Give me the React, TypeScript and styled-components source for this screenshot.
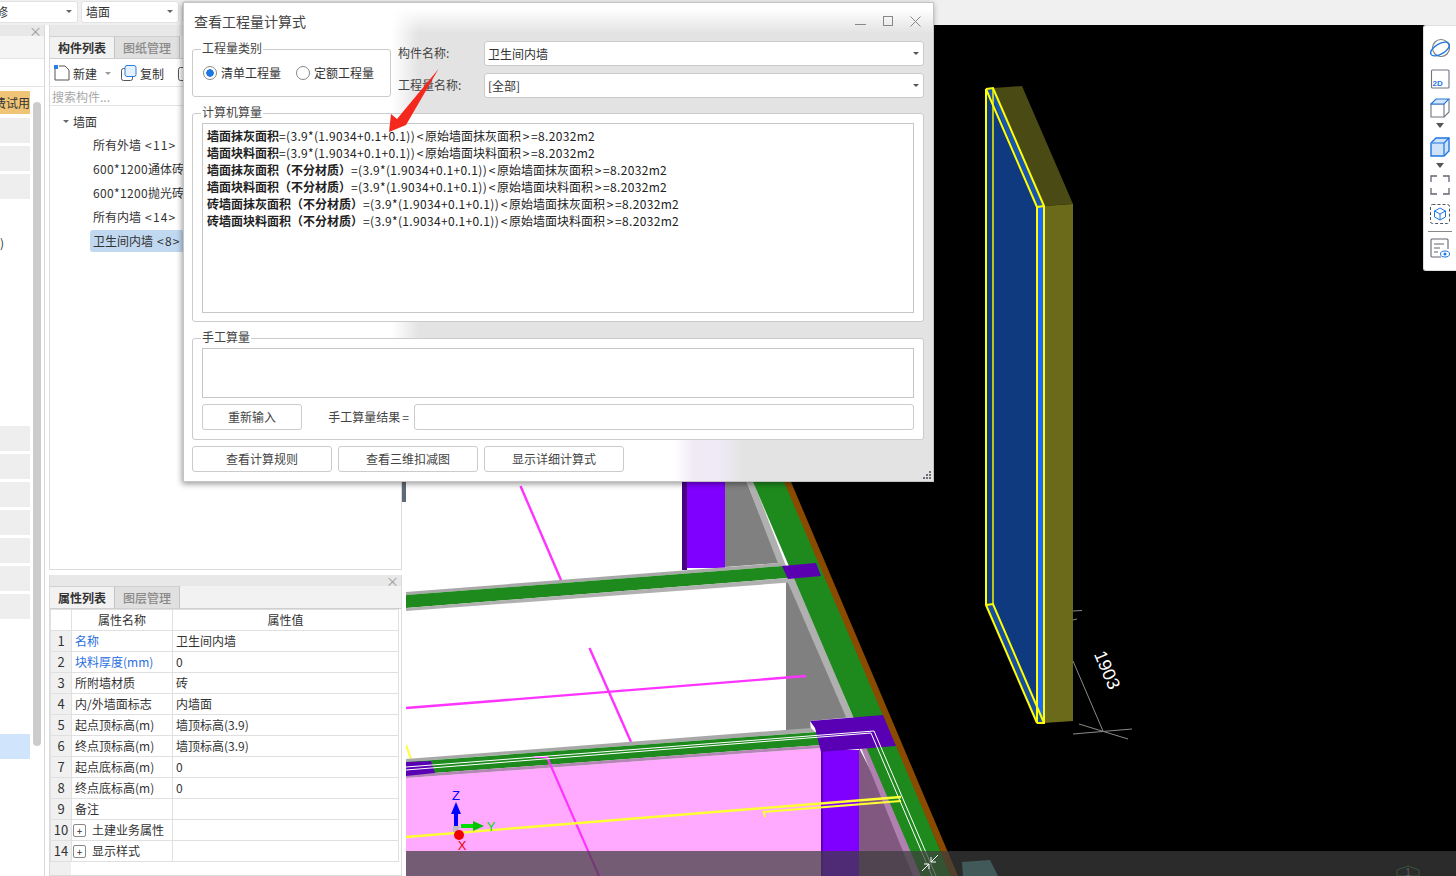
import styled, { createGlobalStyle } from "styled-components"

const GlobalStyle = createGlobalStyle`
  html, body { margin: 0; padding: 0; background: #fff; }
  body { font-family: "Noto Sans CJK SC", "Noto Sans", sans-serif; font-size: 12px; color: #333; }
  * { box-sizing: border-box; }
`

const Page = styled.div`
  position: relative;
  width: 1456px;
  height: 876px;
  overflow: hidden;
  display: flex;
  flex-direction: column;
`

/* top bar */
const TopBar = styled.div`
  height: 25px;
  flex: none;
  display: flex;
  gap: 3px;
  padding-top: 1px;
  background: #f0f0f0;
`
const TopSelect = styled.div<{ $w: number; $shift?: number }>`
  width: ${p => p.$w}px;
  height: 22px;
  margin-left: ${p => p.$shift ?? 0}px;
  padding: 0 0 2px 4px;
  display: flex;
  align-items: center;
  justify-content: space-between;
  background: #fff;
  border: 1px solid #e2e2e2;
  border-radius: 3px;
  font-size: 12px;
`
const Caret = styled.i`
  width: 0;
  height: 0;
  margin-right: 5px;
  border-left: 3px solid transparent;
  border-right: 3px solid transparent;
  border-top: 3px solid #666;
`

const Body = styled.div`
  flex: 1;
  display: flex;
  min-height: 0;
`

/* far left sidebar */
const Sidebar = styled.div`
  width: 45px;
  flex: none;
  border-right: 1px solid #d8d8d8;
  display: flex;
  flex-direction: column;
  overflow: hidden;
`
const CloseStrip = styled.div`
  height: 11px;
  flex: none;
  display: flex;
  align-items: center;
  justify-content: flex-end;
  padding-right: 2px;
  background: #e8e8e8;
  color: #999;
  font-size: 13px;
  line-height: 11px;
`
const SideTabs = styled.div`
  height: 23px;
  flex: none;
  background: #f5f5f5;
  border-bottom: 1px solid #e4e4e4;
`
const SideTools = styled.div`
  height: 28px;
  flex: none;
  border-bottom: 1px solid #e4e4e4;
`
const SideMain = styled.div`
  flex: 1;
  display: flex;
  gap: 3px;
`
const SideList = styled.div`
  width: 30px;
  flex: none;
  padding-top: 4px;
  display: flex;
  flex-direction: column;
`
const SideRow = styled.div<{ $kind: string }>`
  height: ${p => (p.$kind === "orange" ? 23 : 25)}px;
  margin-bottom: ${p => (p.$kind === "orange" ? 4 : 3)}px;
  flex: none;
  display: flex;
  align-items: center;
  justify-content: flex-end;
  overflow: hidden;
  white-space: nowrap;
  font-size: 12px;
  background: ${p =>
    p.$kind === "orange" ? "#efc476" : p.$kind === "gray" ? "#eeeeee" : p.$kind === "blue" ? "#d0e5fb" : "transparent"};
`
const SideParen = styled.span`
  width: 100%;
  text-align: left;
  margin-left: -1px;
`
const SideThumb = styled.div`
  width: 8px;
  height: 644px;
  margin-top: 15px;
  background: #cccccc;
  border-radius: 4px;
`

/* middle panels */
const PanelColumn = styled.div`
  width: 353px;
  margin-left: 4px;
  flex: none;
  display: flex;
  flex-direction: column;
  gap: 5px;
`
const Panel = styled.div<{ $h: number }>`
  height: ${p => p.$h}px;
  flex: none;
  display: flex;
  flex-direction: column;
  background: #fff;
  border: 1px solid #dcdcdc;
  border-top: none;
  overflow: hidden;
`
const TabStrip = styled.div`
  height: 23px;
  flex: none;
  display: flex;
  background: #f2f2f2;
  border-bottom: 1px solid #cfcfcf;
`
const Tab = styled.div<{ $active?: boolean }>`
  width: 65px;
  display: flex;
  align-items: center;
  justify-content: center;
  font-weight: ${p => (p.$active ? 700 : 500)};
  color: ${p => (p.$active ? "#333" : "#8a8a8a")};
  background: ${p => (p.$active ? "#f2f2f2" : "#e0e0e0")};
  border-right: 1px solid #c4c4c4;
  border-top: 1px solid #d0d0d0;
`
const Toolbar = styled.div`
  height: 28px;
  flex: none;
  display: flex;
  align-items: center;
  padding: 1px 0 0 4px;
  border-bottom: 1px solid #e4e4e4;
  white-space: nowrap;
`
const ToolButton = styled.div<{ $w: number }>`
  width: ${p => p.$w}px;
  flex: none;
  display: flex;
  align-items: center;
  gap: 3px;
`
const ToolCaret = styled(Caret)`
  margin: 0 0 0 5px;
  border-top-color: #999;
`
const SearchBox = styled.div`
  height: 19px;
  flex: none;
  padding-left: 2px;
  display: flex;
  align-items: center;
  color: #a8a8a8;
  border-bottom: 1px solid #e4e4e4;
`
const Tree = styled.div`
  padding-top: 3px;
  display: flex;
  flex-direction: column;
  white-space: nowrap;
`
const TreeRoot = styled.div`
  height: 24px;
  display: flex;
  align-items: center;
  padding-left: 13px;
  gap: 4px;
`
const TreeCaret = styled(Caret)`
  margin-right: 0;
`
const TreeItem = styled.div`
  height: 24px;
  display: flex;
  align-items: center;
`
const TreeLabel = styled.span<{ $selected?: boolean }>`
  margin-left: 40px;
  height: 22px;
  line-height: 22px;
  padding: 0 3px;
  border-radius: 3px;
  background: ${p => (p.$selected ? "#c0d8f0" : "transparent")};
`
const TreeCount = styled.span`
  margin-left: 4px;
  letter-spacing: 1.2px;
`
const TreeSize = styled.span`
  letter-spacing: 0.35px;
`

/* property table */
const PropTable = styled.table`
  width: 348px;
  border-collapse: collapse;
  table-layout: fixed;
  flex: none;
  td, th {
    height: 21px;
    padding: 0 0 2px 3px;
    border: 1px solid #e0e0e0;
    font-size: 12px;
    font-weight: 400;
    white-space: nowrap;
    overflow: hidden;
  }
  th { text-align: center; padding: 0 0 2px; }
`
const NumCell = styled.td`
  && { padding: 0 0 1px; text-align: center; background: #f0f0f0; font-size: 13px; }
`
const BlueText = styled.span`
  color: #2a6fe0;
`
const Expander = styled.span`
  display: inline-flex;
  width: 13px;
  height: 13px;
  margin: 0 6px 0 -2px;
  vertical-align: 0;
  align-items: center;
  justify-content: center;
  border: 1px solid #888;
  border-radius: 2px;
  font-size: 10px;
  line-height: 10px;
`
const Gutter = styled.div`
  width: 21px;
  flex: 1;
  background: #f0f0f0;
`

const Splitter = styled.div`
  width: 4px;
  flex: none;
  background: #fff;
`
const SplitHandle = styled.div`
  height: 20px;
  margin-top: 457px;
  background: #5d6b78;
`

/* 3D viewport */
const Viewport = styled.div`
  position: relative;
  flex: 1;
  background: #000;
  overflow: hidden;
`
const Scene = styled.svg`
  display: block;
  width: 1050px;
  height: 851px;
`
const BottomShade = styled.div`
  position: absolute;
  left: 0;
  right: 0;
  bottom: 0;
  height: 25px;
  padding: 2px 0 0 514px;
  background: rgba(60, 60, 60, 0.71);
`
const ViewTools = styled.div`
  position: absolute;
  top: 0;
  right: 0;
  width: 33px;
  height: 246px;
  padding: 12px 1px 0 0;
  display: flex;
  flex-direction: column;
  align-items: center;
  background: #fff;
  border: 1px solid #e0e0e0;
  border-right: none;
  border-radius: 3px 0 0 3px;
`
const ToolIcon = styled.svg<{ $mb?: number }>`
  display: block;
  flex: none;
  margin-bottom: ${p => p.$mb ?? 0}px;
`
const ViewDivider = styled.div`
  width: 24px;
  height: 1px;
  margin: 0 0 6px;
  flex: none;
  background: #888;
`

/* dialog */
const Dialog = styled.div`
  position: absolute;
  left: 183px;
  top: 2px;
  width: 751px;
  height: 480px;
  display: flex;
  flex-direction: column;
  border: 1px solid #c4c4c4;
  box-shadow: -1px 2px 6px rgba(0, 0, 0, 0.4);
  background:
    linear-gradient(to right, #fff 0, #fff 490px, #efeaf6 510px, #efeaf6 535px, #e3e3e3 560px) left bottom / 100% 42px no-repeat,
    linear-gradient(to bottom, #fff 6px, rgba(255, 255, 255, 0) 30px),
    linear-gradient(to right, #fff 208px, rgba(255, 255, 255, 0) 235px),
    #e3e3e3;
`
const TitleBar = styled.div`
  height: 38px;
  flex: none;
  padding: 0 12px 2px 10px;
  display: flex;
  align-items: center;
  justify-content: space-between;
  font-size: 14px;
  color: #444;
`
const WinButtons = styled.div`
  display: flex;
  gap: 17px;
  align-items: center;
`
const DialogBody = styled.div`
  flex: 1;
  display: flex;
  flex-direction: column;
  padding: 0 9px 0 8px;
`
const TopRow = styled.div`
  display: flex;
  flex: none;
  height: 57px;
  gap: 7px;
`
const Group = styled.div<{ $h: number; $mt?: number; $w?: number }>`
  position: relative;
  flex: none;
  width: ${p => (p.$w ? `${p.$w}px` : "auto")};
  height: ${p => p.$h}px;
  margin-top: ${p => p.$mt ?? 0}px;
  padding: 9px;
  display: flex;
  flex-direction: column;
  background: #fff;
  border: 1px solid #cbcbcb;
  border-radius: 3px;
`
const GroupLabel = styled.span`
  position: absolute;
  left: 8px;
  top: -11px;
  line-height: 18px;
  padding: 0 1px;
  background: #fff;
  color: #444;
`
const RadioRow = styled.div`
  display: flex;
  align-items: center;
  height: 100%;
  padding-left: 1px;
  gap: 4px;
`
const Radio = styled.span<{ $on?: boolean; $gap?: number }>`
  width: 14px;
  height: 14px;
  margin-left: ${p => p.$gap ?? 0}px;
  flex: none;
  border: 1px solid #8a8a8a;
  border-radius: 50%;
  background: radial-gradient(circle, ${p => (p.$on ? "#1f77e0 0, #1f77e0 3.5px" : "#fff 0, #fff 3.5px")}, #fff 4px);
`
const RadioText = styled.span`
  margin-top: -1px;
`
const FieldColumn = styled.div`
  flex: 1;
  display: flex;
  flex-direction: column;
  gap: 7px;
`
const FieldRow = styled.div`
  height: 25px;
  display: flex;
  align-items: center;
`
const FieldLabel = styled.span`
  width: 86px;
  flex: none;
  margin-top: -2px;
  color: #444;
`
const FieldSelect = styled.div`
  flex: 1;
  height: 25px;
  padding: 0 0 1px 3px;
  display: flex;
  align-items: center;
  justify-content: space-between;
  background: #fff;
  border: 1px solid #cbcbcb;
  border-radius: 3px;
`
const SmallCaret = styled(Caret)`
  margin-right: 4px;
  border-top-color: #555;
`
const TextBox = styled.div<{ $h: number }>`
  height: ${p => p.$h}px;
  flex: none;
  padding: 3px 4px;
  background: #fff;
  border: 1px solid #c6c6c6;
`
const FormulaLine = styled.div`
  height: 17px;
  line-height: 17px;
  white-space: nowrap;
  color: #222;
`
const FormulaMath = styled.span`
  letter-spacing: 0.33px;
`
const Angle = styled.span`
  display: inline-block;
  width: 10px;
  text-align: center;
`
const ManualRow = styled.div`
  margin-top: 6px;
  height: 26px;
  display: flex;
  align-items: center;
`
const Button = styled.div<{ $w: number }>`
  width: ${p => p.$w}px;
  height: 26px;
  flex: none;
  padding-bottom: 2px;
  display: flex;
  align-items: center;
  justify-content: center;
  background: #fff;
  border: 1px solid #cbcbcb;
  border-radius: 3px;
  color: #444;
`
const ManualLabel = styled.span`
  width: 112px;
  flex: none;
  margin-top: -2px;
  text-align: right;
  padding-right: 5px;
  color: #444;
`
const ManualEquals = styled.span`
  margin-left: 2px;
`
const ManualInput = styled.div`
  flex: 1;
  height: 26px;
  background: #fff;
  border: 1px solid #cbcbcb;
  border-radius: 3px;
`
const BottomRow = styled.div`
  margin-top: 6px;
  display: flex;
  gap: 6px;
`
const Grip = styled.svg`
  position: absolute;
  right: 1px;
  bottom: 1px;
`
const RedArrow = styled.svg`
  position: absolute;
  left: 0;
  top: 0;
  pointer-events: none;
`

const sideRows = Array.from({ length: 23 }, (_, i) => {
  if (i <= 2 || (i >= 11 && i <= 17)) return "gray"
  if (i === 22) return "blue"
  return "blank"
})

const formulas = [
  ["墙面抹灰面积", "原始墙面抹灰面积"],
  ["墙面块料面积", "原始墙面块料面积"],
  ["墙面抹灰面积（不分材质）", "原始墙面抹灰面积"],
  ["墙面块料面积（不分材质）", "原始墙面块料面积"],
  ["砖墙面抹灰面积（不分材质）", "原始墙面抹灰面积"],
  ["砖墙面块料面积（不分材质）", "原始墙面块料面积"],
]

const props = [
  ["名称", "卫生间内墙", true],
  ["块料厚度(mm)", "0", true],
  ["所附墙材质", "砖"],
  ["内/外墙面标志", "内墙面"],
  ["起点顶标高(m)", "墙顶标高(3.9)"],
  ["终点顶标高(m)", "墙顶标高(3.9)"],
  ["起点底标高(m)", "0"],
  ["终点底标高(m)", "0"],
  ["备注", ""],
] as const

const SceneDrawing = () => (
  <Scene viewBox="406 25 1050 851">
    <polygon points="406,400 740,400 915,876 406,876" fill="#fff" />
    {/* back column and side wall */}
    <rect x="682" y="470" width="5" height="100" fill="#4b0082" />
    <rect x="687" y="470" width="38" height="98" fill="#8000ff" />
    <polygon points="725,470 742,470 779,563 725,567" fill="#808080" />
    <polygon points="786,578 853,717 810,721 811,730 786,732" fill="#808080" />
    <polygon points="742,470 749,470 786,566 779,566" fill="#b0b0b0" />
    <polygon points="786,578 796,578 853,717 846,717" fill="#b0b0b0" />
    <polygon points="859,748 859,876 925,876" fill="#805880" />
    <polygon points="861,748 868,748 924,876 913,876" fill="#b080b0" />
    {/* long green band and brown edge */}
    <polygon points="748,470 783,470 951,876 921,876" fill="#1e8a1e" />
    <polygon points="779,470 786,470 958,876 951,876" fill="#8a4b00" />
    {/* upper beam */}
    <polygon points="406,592 779,563 783,566 406,595" fill="#a8a8a8" />
    <polygon points="406,595 783,566 788,578 406,608" fill="#1e8a1e" />
    <polygon points="406,608 788,578 796,582 406,611" fill="#b0b0b0" />
    <polygon points="782,566 816,563 821,576 788,579" fill="#5a00b0" />
    {/* magenta lines */}
    <g stroke="#ff33ff" strokeWidth="2.4" fill="none">
      <line x1="520.5" y1="486" x2="561" y2="580" />
      <line x1="589.5" y1="648" x2="631" y2="742" />
      <line x1="406" y1="708" x2="806" y2="676" />
    </g>
    <path d="M406 745 L411 759" stroke="#ffff33" strokeWidth="2" fill="none" />
    {/* pink wall */}
    <polygon points="406,778 821,748 821,876 406,876" fill="#ffaaff" />
    {/* lower beam */}
    <polygon points="406,759 811,728 815,732 406,762" fill="#a8a8a8" />
    <polygon points="406,762 817,732 821,745 406,775" fill="#1e8a1e" />
    <polygon points="406,775 821,745 821,748 406,778" fill="#b585b5" />
    <polygon points="406,762 431,761 435,773 406,776" fill="#5a00b4" />
    {/* front column */}
    <rect x="821" y="750" width="2" height="126" fill="#5a00b4" />
    <rect x="823" y="750" width="36" height="126" fill="#8000ff" />
    <polygon points="810,721 883,715 896,746 821,752 815,728" fill="#5a00b4" />
    {/* magenta over pink, white outline */}
    <path d="M534 757 L547 757 L599 876" stroke="#ff33ff" strokeWidth="2.2" fill="none" />
    <path d="M406 767 L874 731 L936 876" stroke="#fff" strokeWidth="1" fill="none" />
    <path d="M406 770 L871 733 L932 876" stroke="#fff" strokeWidth="1" fill="none" />
    {/* yellow lines */}
    <line x1="406" y1="837" x2="901" y2="797" stroke="#ffff33" strokeWidth="2.4" />
    <path d="M765 817 L763.5 812 L901 801" stroke="#ffff33" strokeWidth="2" fill="none" />
    {/* axis gizmo */}
    <rect x="453" y="826" width="6" height="6" fill="#bbb" />
    <rect x="454" y="811" width="4" height="15" fill="#0000ff" />
    <polygon points="456,802 451,814 461,814" fill="#0000ff" />
    <rect x="461" y="824" width="12" height="4" fill="#00e000" />
    <polygon points="484,826 473,821 473,831" fill="#00c000" />
    <circle cx="459" cy="835" r="5" fill="#f00000" />
    <text x="456" y="800" fontSize="13" fill="#0000ff" textAnchor="middle" fontFamily="Liberation Sans">Z</text>
    <text x="491" y="831" fontSize="13" fill="#00e000" textAnchor="middle" fontFamily="Liberation Sans">Y</text>
    <text x="462" y="850" fontSize="13" fill="#f00000" textAnchor="middle" fontFamily="Liberation Sans">X</text>
    {/* selected wall on the right */}
    <polygon points="993,88 1022,86 1073,204 1043,206" fill="#4a4a14" />
    <polygon points="1044,206 1073,204 1073,721 1044,723" fill="#6a6a1a" />
    <polygon points="986,89 993,88 1044,206 1037,207" fill="#1a55b0" />
    <polygon points="986,89 993,100 1037,207 1037,723 993,604 986,605" fill="#0f3a80" />
    <rect x="1037" y="206" width="7" height="517" fill="#1a6aff" />
    <polygon points="986,605 993,604 1044,723 1037,723" fill="#1a4fa0" />
    <g stroke="#ffff00" strokeWidth="2" fill="none">
      <path d="M986 89 L986 605 L1037 723 L1037 207 Z" />
      <path d="M986 89 L993 88 L1044 206 L1044 723 L1037 723" />
      <path d="M1037 207 L1044 206" />
      <path d="M986 605 L993 604 L1044 723" />
      <path d="M993 88 L993 604" strokeWidth="1.4" />
    </g>
    <g stroke="#8a8a8a" strokeWidth="1" fill="none">
      <line x1="1073" y1="611" x2="1082" y2="610.5" />
      <line x1="1073" y1="620" x2="1077" y2="619" />
      <line x1="1073" y1="661" x2="1103" y2="731" />
      <line x1="1079" y1="724" x2="1128" y2="739" />
      <line x1="1073" y1="734" x2="1132" y2="729" />
    </g>
    <text x="1107" y="676" fontSize="18" fill="#fff" textAnchor="middle" fontFamily="Liberation Sans" transform="rotate(67 1107 670)">1903</text>
    {/* small block under the bottom shade */}
    <polygon points="962,862 990,860 998,876 963,876" fill="#4f9f9f" />
    <polygon points="1397,876 1397,870 1408,866 1419,870 1419,876" fill="none" stroke="#2e8a4a" strokeWidth="1" />
    <text x="1408" y="876" fontSize="10" fill="#aaa" textAnchor="middle" fontFamily="Liberation Sans">1</text>
  </Scene>
)

const ViewToolbar = () => (
  <ViewTools>
    <ToolIcon width="22" height="22" viewBox="0 0 22 22" fill="none" $mb={9}>
      <circle cx="12" cy="10" r="8.5" stroke="#7a7f88" strokeWidth="1.2" />
      <ellipse cx="11" cy="11" rx="10.5" ry="5" transform="rotate(-30 11 11)" stroke="#1f77e0" strokeWidth="1.3" />
    </ToolIcon>
    <ToolIcon width="20" height="20" viewBox="0 0 20 20" fill="none" $mb={8}>
      <path d="M1.5 9.5 V2 a1 1 0 0 1 1-1 H18 a1 1 0 0 1 1 1 V18 a1 1 0 0 1-1 1 H2.5 a1 1 0 0 1-1-1 V9.5" stroke="#6f7680" strokeWidth="1.1" />
      <text x="2.5" y="17" fontSize="8" fontWeight="700" fill="#1f77e0" fontFamily="Liberation Sans">2D</text>
    </ToolIcon>
    <ToolIcon width="20" height="21" viewBox="0 0 20 21" fill="none" $mb={5}>
      <path d="M1 7 H14 V20 H1 Z" stroke="#6f7680" strokeWidth="1.1" />
      <path d="M1 7 L6 2 H19 L14 7 Z" fill="#d5e5f8" stroke="#1f77e0" strokeWidth="1.1" />
      <path d="M19 2 V15 L14 20" stroke="#6f7680" strokeWidth="1.1" />
    </ToolIcon>
    <ToolIcon width="8" height="5" viewBox="0 0 8 5" $mb={8}>
      <polygon points="0,0 8,0 4,5" fill="#555" />
    </ToolIcon>
    <ToolIcon width="20" height="21" viewBox="0 0 20 21" fill="#cfe2fa" $mb={6}>
      <path d="M1 7 L6 2 H19 V15 L14 20 H1 Z" stroke="#1f77e0" strokeWidth="1.4" />
      <path d="M1 7 H14 V20 M14 7 L19 2" stroke="#1f77e0" strokeWidth="1.2" />
    </ToolIcon>
    <ToolIcon width="8" height="5" viewBox="0 0 8 5" $mb={7}>
      <polygon points="0,0 8,0 4,5" fill="#555" />
    </ToolIcon>
    <ToolIcon width="20" height="20" viewBox="0 0 20 20" fill="none" stroke="#5f6670" strokeWidth="1.3" $mb={9}>
      <path d="M1 7 V1 H7 M13 1 H19 V7 M19 13 V19 H13 M7 19 H1 V13" />
    </ToolIcon>
    <ToolIcon width="20" height="20" viewBox="0 0 20 20" fill="none" $mb={7}>
      <rect x="0.5" y="0.5" width="19" height="19" rx="2" stroke="#4f5660" strokeDasharray="3 2" />
      <path d="M10 4 L15.5 7 V13 L10 16 L4.5 13 V7 Z M4.5 7 L10 10 L15.5 7 M10 10 V16" stroke="#1f77e0" strokeWidth="1" />
    </ToolIcon>
    <ViewDivider />
    <ToolIcon width="20" height="20" viewBox="0 0 20 20" fill="none">
      <path d="M11 19 H2 a1 1 0 0 1-1-1 V2 a1 1 0 0 1 1-1 H17 a1 1 0 0 1 1 1 V11" stroke="#5f6670" strokeWidth="1.1" />
      <path d="M4 6 H14 M4 10 H10 M4 14 H8" stroke="#5f6670" strokeWidth="1.1" />
      <ellipse cx="15" cy="16" rx="4.5" ry="3" stroke="#1f77e0" strokeWidth="1" />
      <circle cx="15" cy="16" r="1.5" fill="#1f77e0" />
    </ToolIcon>
  </ViewTools>
)

const CalcDialog = () => (
  <Dialog>
    <TitleBar>
      查看工程量计算式
      <WinButtons>
        <svg width="11" height="12" viewBox="0 0 11 12" fill="none" stroke="#888" strokeWidth="1"><path d="M0 9.5 H11" /></svg>
        <svg width="10" height="10" viewBox="0 0 10 10" fill="none" stroke="#888" strokeWidth="1"><rect x="0.5" y="0.5" width="9" height="9" /></svg>
        <svg width="11" height="11" viewBox="0 0 11 11" fill="none" stroke="#888" strokeWidth="1"><path d="M0.5 0.5 L10.5 10.5 M10.5 0.5 L0.5 10.5" /></svg>
      </WinButtons>
    </TitleBar>
    <DialogBody>
      <TopRow>
        <Group $h={48} $mt={8} $w={199}>
          <GroupLabel>工程量类别</GroupLabel>
          <RadioRow>
            <Radio $on />
            <RadioText>清单工程量</RadioText>
            <Radio $gap={11} />
            <RadioText>定额工程量</RadioText>
          </RadioRow>
        </Group>
        <FieldColumn>
          <FieldRow>
            <FieldLabel>构件名称:</FieldLabel>
            <FieldSelect>卫生间内墙<SmallCaret /></FieldSelect>
          </FieldRow>
          <FieldRow>
            <FieldLabel>工程量名称:</FieldLabel>
            <FieldSelect>[全部]<SmallCaret /></FieldSelect>
          </FieldRow>
        </FieldColumn>
      </TopRow>
      <Group $h={209} $mt={15}>
        <GroupLabel>计算机算量</GroupLabel>
        <TextBox $h={190}>
          {formulas.map(([name, source]) => (
            <FormulaLine key={name}>
              <b>{name}</b>
              <FormulaMath>=(3.9*(1.9034+0.1+0.1))</FormulaMath>
              <Angle>&lt;</Angle>{source}<Angle>&gt;</Angle>
              <FormulaMath>=8.2032m2</FormulaMath>
            </FormulaLine>
          ))}
        </TextBox>
      </Group>
      <Group $h={102} $mt={16}>
        <GroupLabel>手工算量</GroupLabel>
        <TextBox $h={50} />
        <ManualRow>
          <Button $w={100}>重新输入</Button>
          <ManualLabel>手工算量结果<ManualEquals>=</ManualEquals></ManualLabel>
          <ManualInput />
        </ManualRow>
      </Group>
      <BottomRow>
        <Button $w={140}>查看计算规则</Button>
        <Button $w={140}>查看三维扣减图</Button>
        <Button $w={140}>显示详细计算式</Button>
      </BottomRow>
    </DialogBody>
    <Grip width="9" height="9" viewBox="0 0 9 9" fill="#6b7078">
      <rect x="6" y="0" width="2" height="2" />
      <rect x="3" y="3" width="2" height="2" />
      <rect x="6" y="3" width="2" height="2" />
      <rect x="0" y="6" width="2" height="2" />
      <rect x="3" y="6" width="2" height="2" />
      <rect x="6" y="6" width="2" height="2" />
    </Grip>
    <RedArrow width="751" height="480" viewBox="183 3 751 480">
      <polygon points="437.5,69 405,125 388,132 390,114 396,119" fill="#f5281e" />
    </RedArrow>
  </Dialog>
)

export default function App() {
  return (
    <Page>
      <GlobalStyle />
      <TopBar>
        <TopSelect $w={87} $shift={-9}>修<Caret /></TopSelect>
        <TopSelect $w={98}>墙面<Caret /></TopSelect>
        <TopSelect $w={300} />
      </TopBar>
      <Body>
        <Sidebar>
          <CloseStrip>×</CloseStrip>
          <SideTabs />
          <SideTools />
          <SideMain>
            <SideList>
              <SideRow $kind="orange">费试用</SideRow>
              {sideRows.map((kind, i) => (
                <SideRow key={i} $kind={kind}>{i === 4 && <SideParen>)</SideParen>}</SideRow>
              ))}
            </SideList>
            <SideThumb />
          </SideMain>
        </Sidebar>
        <PanelColumn>
          <Panel $h={545}>
            <CloseStrip />
            <TabStrip>
              <Tab $active>构件列表</Tab>
              <Tab>图纸管理</Tab>
            </TabStrip>
            <Toolbar>
              <ToolButton $w={67}>
                <svg width="16" height="16" viewBox="0 0 16 16" fill="none">
                  <path d="M1 4 V15 H15 V5 L11 1 H5" stroke="#555" strokeWidth="1" />
                  <rect x="0" y="0" width="4" height="4" fill="#2a7fe0" />
                </svg>
                新建
                <ToolCaret />
              </ToolButton>
              <ToolButton $w={57}>
                <svg width="16" height="16" viewBox="0 0 16 16" fill="none">
                  <rect x="0.5" y="3.5" width="11" height="12" rx="2" stroke="#555" />
                  <rect x="4" y="0.5" width="11" height="11" rx="2" fill="#e4f0fc" stroke="#2a7fe0" />
                </svg>
                复制
              </ToolButton>
              <svg width="16" height="16" viewBox="0 0 16 16" fill="none">
                <rect x="0.5" y="2.5" width="13" height="13" rx="2" stroke="#555" />
              </svg>
            </Toolbar>
            <SearchBox>搜索构件...</SearchBox>
            <Tree>
              <TreeRoot><TreeCaret />墙面</TreeRoot>
              <TreeItem><TreeLabel>所有外墙<TreeCount>&lt;11&gt;</TreeCount></TreeLabel></TreeItem>
              <TreeItem><TreeLabel><TreeSize>600*1200</TreeSize>通体砖</TreeLabel></TreeItem>
              <TreeItem><TreeLabel><TreeSize>600*1200</TreeSize>抛光砖</TreeLabel></TreeItem>
              <TreeItem><TreeLabel>所有内墙<TreeCount>&lt;14&gt;</TreeCount></TreeLabel></TreeItem>
              <TreeItem><TreeLabel $selected>卫生间内墙<TreeCount>&lt;8&gt;</TreeCount></TreeLabel></TreeItem>
            </Tree>
          </Panel>
          <Panel $h={301}>
            <CloseStrip>×</CloseStrip>
            <TabStrip>
              <Tab $active>属性列表</Tab>
              <Tab>图层管理</Tab>
            </TabStrip>
            <PropTable>
              <colgroup>
                <col width={21} />
                <col width={101} />
                <col width={226} />
              </colgroup>
              <thead>
                <tr>
                  <th />
                  <th>属性名称</th>
                  <th>属性值</th>
                </tr>
              </thead>
              <tbody>
                {props.map((row, i) => (
                  <tr key={row[0]}>
                    <NumCell>{i + 1}</NumCell>
                    <td>{row[2] ? <BlueText>{row[0]}</BlueText> : row[0]}</td>
                    <td>{row[1]}</td>
                  </tr>
                ))}
                <tr>
                  <NumCell>10</NumCell>
                  <td><Expander>+</Expander>土建业务属性</td>
                  <td />
                </tr>
                <tr>
                  <NumCell>14</NumCell>
                  <td><Expander>+</Expander>显示样式</td>
                  <td />
                </tr>
              </tbody>
            </PropTable>
            <Gutter />
          </Panel>
        </PanelColumn>
        <Splitter><SplitHandle /></Splitter>
        <Viewport>
          <SceneDrawing />
          <BottomShade>
            <svg width="20" height="20" viewBox="0 0 20 20" fill="none" stroke="#fff" strokeWidth="1">
              <path d="M18 2 L11 9 M11 4 V9 H16 M2 18 L9 11 M4 11 H9 V16" />
            </svg>
          </BottomShade>
          <ViewToolbar />
        </Viewport>
      </Body>
      <CalcDialog />
    </Page>
  )
}
